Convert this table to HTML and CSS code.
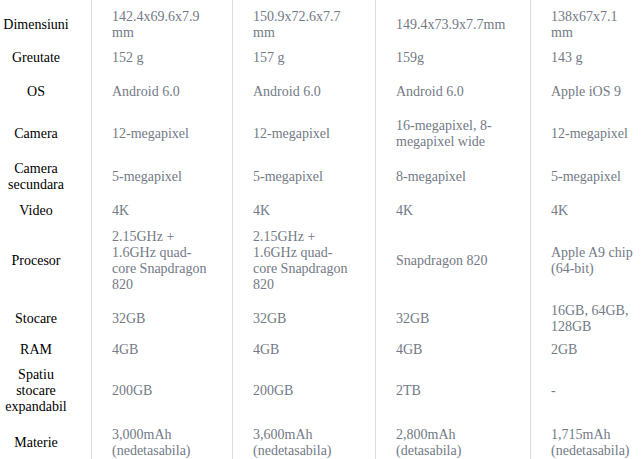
FILE: index.html
```html
<!DOCTYPE html>
<html lang="ro">
<head>
<meta charset="utf-8">
<title>Comparatie specificatii</title>
<link rel="stylesheet" href="styles.css">
</head>
<body>
<div class="specs">
  <div class="label first">Dimensiuni</div>
  <div class="val first">142.4x69.6x7.9 mm</div>
  <div class="val first">150.9x72.6x7.7 mm</div>
  <div class="val first">149.4x73.9x7.7mm</div>
  <div class="val first">138x67x7.1 mm</div>

  <div class="label">Greutate</div>
  <div class="val">152 g</div>
  <div class="val">157 g</div>
  <div class="val">159g</div>
  <div class="val">143 g</div>

  <div class="label">OS</div>
  <div class="val">Android 6.0</div>
  <div class="val">Android 6.0</div>
  <div class="val">Android 6.0</div>
  <div class="val">Apple iOS 9</div>

  <div class="label">Camera</div>
  <div class="val">12-megapixel</div>
  <div class="val">12-megapixel</div>
  <div class="val">16-megapixel, 8-megapixel wide</div>
  <div class="val">12-megapixel</div>

  <div class="label">Camera secundara</div>
  <div class="val">5-megapixel</div>
  <div class="val">5-megapixel</div>
  <div class="val">8-megapixel</div>
  <div class="val">5-megapixel</div>

  <div class="label">Video</div>
  <div class="val">4K</div>
  <div class="val">4K</div>
  <div class="val">4K</div>
  <div class="val">4K</div>

  <div class="label">Procesor</div>
  <div class="val">2.15GHz + 1.6GHz quad-core Snapdragon 820</div>
  <div class="val">2.15GHz + 1.6GHz quad-core Snapdragon 820</div>
  <div class="val">Snapdragon 820</div>
  <div class="val">Apple A9 chip (64-bit)</div>

  <div class="label">Stocare</div>
  <div class="val">32GB</div>
  <div class="val">32GB</div>
  <div class="val">32GB</div>
  <div class="val">16GB, 64GB, 128GB</div>

  <div class="label">RAM</div>
  <div class="val">4GB</div>
  <div class="val">4GB</div>
  <div class="val">4GB</div>
  <div class="val">2GB</div>

  <div class="label">Spatiu stocare expandabil</div>
  <div class="val">200GB</div>
  <div class="val">200GB</div>
  <div class="val">2TB</div>
  <div class="val">-</div>

  <div class="label">Materie</div>
  <div class="val">3,000mAh (nedetasabila)</div>
  <div class="val">3,600mAh (nedetasabila)</div>
  <div class="val">2,800mAh (detasabila)</div>
  <div class="val">1,715mAh (nedetasabila)</div>
</div>
</body>
</html>
```
FILE: styles.css
```css
html, body {
  margin: 0;
  padding: 0;
  background: #ffffff;
  overflow: hidden;
}

body {
  font-family: "Liberation Serif", "Times New Roman", serif;
  font-size: 14px;
  line-height: normal;
}

.specs {
  display: grid;
  grid-template-columns: 91px 141px 143px 155px 129px;
  grid-template-rows: 45px 26px 42px 42px 43px 26px 74px 42px 20px 62px 42px;
  width: 609px;
}

.label,
.val {
  display: flex;
  align-items: center;
}

.label {
  justify-content: center;
  text-align: center;
  color: #000000;
  padding: 0 19px 0 0;
}

.val {
  border-left: 1px solid #dcdcdc;
  padding: 0 20px;
  color: #737a86;
}

.first {
  padding-top: 4px;
}
```
